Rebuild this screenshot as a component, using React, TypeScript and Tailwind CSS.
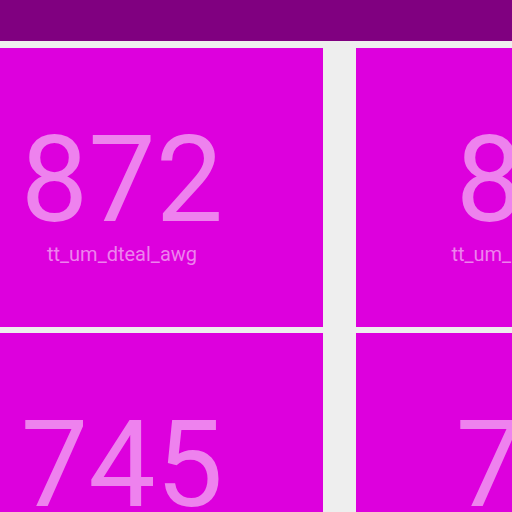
import React from "react";

const tiles = [
  { value: "872", label: "tt_um_dteal_awg" },
  { value: "872", label: "tt_um_rejunity_sn76489" },
  { value: "745", label: "tt_um_example_one" },
  { value: "745", label: "tt_um_example_two" },
];

export default function App() {
  return (
    <div className="w-[512px] h-[512px] overflow-hidden bg-[#eeeeee]" style={{ fontFamily: "Roboto, 'Noto Sans', sans-serif" }}>
      <div className="h-[41px] bg-[#800080]" />
      <div className="pt-[7px] -ml-[79px] grid grid-cols-[402px_402px] gap-x-[33px] gap-y-[6px] w-max">
        {tiles.map((t, i) => (
          <div key={i} className="h-[279px] bg-[#dd00dd] flex flex-col items-center pt-[72px] text-[#ee82ee]">
            <div className="text-[120px] leading-[120px]">{t.value}</div>
            <div className="text-[20px] leading-[20px] mt-[4px] whitespace-nowrap">{t.label}</div>
          </div>
        ))}
      </div>
    </div>
  );
}
